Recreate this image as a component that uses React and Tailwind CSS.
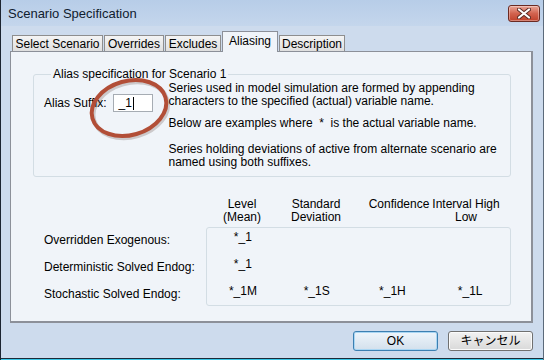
import React from 'react';

const tabs = [
  { label: 'Select Scenario', w: 'w-[91px]' },
  { label: 'Overrides', w: 'w-[60px]' },
  { label: 'Excludes', w: 'w-[56px]' },
  { label: 'Aliasing', w: 'w-[56px]', active: true },
  { label: 'Description', w: 'w-[66px]' },
];

const rows = [
  { label: 'Overridden Exogenous:', values: ['*_1', '', '', ''] },
  { label: 'Deterministic Solved Endog:', values: ['*_1', '', '', ''] },
  { label: 'Stochastic Solved Endog:', values: ['*_1M', '*_1S', '*_1H', '*_1L'] },
];

const colW = ['w-[72px]', 'w-[76px]', 'w-[76px]', 'w-[80px]'];

const CloseButton = () => (
  <div className="w-[32px] h-[17px] mt-[5px] mr-[3px] rounded-[3px] border border-[#6b2a22] bg-gradient-to-b from-[#e9a597] via-[#d2634f] to-[#c0402a] flex items-center justify-center shadow-[inset_0_0_0_1px_rgba(255,255,255,0.35)]">
    <svg width="14" height="11" viewBox="0 0 14 11">
      <path d="M2 1.5 L12 9.5 M12 1.5 L2 9.5" stroke="#5a2a24" strokeWidth="4" strokeLinecap="round" />
      <path d="M2 1.5 L12 9.5 M12 1.5 L2 9.5" stroke="#ffffff" strokeWidth="2.2" strokeLinecap="round" />
    </svg>
  </div>
);

export default function App() {
  return (
    <div className="relative w-[544px] h-[360px] flex flex-col bg-[#cddbed] border-l border-l-[#1c2430] border-r border-r-[#5c6a7a] text-black text-[12px] font-['Liberation_Sans','Noto_Sans_CJK_JP',sans-serif]">
      {/* title bar */}
      <div className="h-[26px] flex items-start justify-between bg-gradient-to-b from-[#b7cde8] to-[#c4d6ec]">
        <div className="pt-[6px] pl-[7px] text-[13px] leading-[16px] text-[#10202f]">Scenario Specification</div>
        <CloseButton />
      </div>

      {/* tabs */}
      <div className="mt-[5px] ml-[11px] h-[20px] flex items-end gap-[1px] relative z-10">
        {tabs.map((t) =>
          t.active ? (
            <div
              key={t.label}
              className={`${t.w} h-[21px] -mb-[1px] border border-b-0 border-[#8c9099] bg-[#f0f4f9] flex items-center justify-center pb-[2px] leading-[14px]`}
            >
              {t.label}
            </div>
          ) : (
            <div
              key={t.label}
              className={`${t.w} h-[16px] border border-b-0 border-[#8e8e8e] bg-gradient-to-b from-[#f4f4f4] to-[#dfdfdf] flex items-center justify-center leading-[14px]`}
            >
              {t.label}
            </div>
          )
        )}
      </div>

      {/* panel */}
      <div className="ml-[9px] w-[523px] h-[272px] border border-[#8c9099] border-r-2 border-b-2 bg-[#f0f4f9] flex flex-col">
        <fieldset className="ml-[22px] mt-[16px] w-[478px] h-[109px] border border-[#d3dde4] rounded-[3px] pl-[10px]">
          <legend className="ml-[7px] px-[2px] leading-[13px]">Alias specification for Scenario 1</legend>
          <div className="flex items-start pt-[1px]">
            <div className="flex items-center gap-[7px] mt-[12px]">
              <span className="leading-[14px]">Alias Suffix:</span>
              <div className="w-[40px] h-[18px] border border-[#a6acb3] bg-white flex items-center pl-[4px] leading-[14px]">
                _1<span className="inline-block w-[1px] h-[13px] bg-black ml-[1px]" />
              </div>
            </div>
            <div className="ml-[15px] leading-[13px]">
              <p>Series used in model simulation are formed by appending<br />characters to the specified (actual) variable name.</p>
              <p className="mt-[9px]">Below are examples where&nbsp; *&nbsp; is the actual variable name.</p>
              <p className="mt-[13px]">Series holding deviations of active from alternate scenario are<br />named using both suffixes.</p>
            </div>
          </div>
        </fieldset>

        {/* headers */}
        <div className="mt-[21px] ml-[195px] flex leading-[13px] text-center">
          <div className={colW[0]}>Level<br />(Mean)</div>
          <div className={colW[1]}>Standard<br />Deviation</div>
          <div className={`${colW[2]} pl-[14px]`}>Confidence</div>
          <div className={`${colW[3]} pr-[8px]`}>Interval High<br />Low</div>
        </div>

        {/* rows */}
        <div className="mt-[3px] flex">
          <div className="w-[195px] pl-[33px] pt-[7px] leading-[12px]">
            {rows.map((r) => (
              <div key={r.label} className="h-[27px]">{r.label}</div>
            ))}
          </div>
          <div className="w-[305px] h-[79px] border border-[#d3dde4] rounded-[3px] leading-[12px]">
            {rows.map((r) => (
              <div key={r.label} className="h-[27px] pt-[3px] flex text-center">
                {r.values.map((v, i) => (
                  <div key={i} className={colW[i]}>{v}</div>
                ))}
              </div>
            ))}
          </div>
        </div>
      </div>

      {/* buttons */}
      <div className="mt-[8px] pr-[10px] flex justify-end gap-[10px]">
        <button className="w-[85px] h-[20px] rounded-[3px] border border-[#3c7fb1] bg-gradient-to-b from-[#eef5fb] to-[#d3e0ec] shadow-[inset_0_0_0_1px_#a9d6f3] leading-[14px]">OK</button>
        <button className="w-[85px] h-[20px] rounded-[3px] border border-[#707070] bg-gradient-to-b from-[#f2f2f2] to-[#d9d9d9] shadow-[inset_0_0_0_1px_#fbfbfb] leading-[14px]">キャンセル</button>
      </div>

      <div className="mt-auto h-[1px] bg-[#1c2a38]" />
      <div className="h-[1px] bg-[#3ac6e6]" />

      {/* red annotation ellipse */}
      <svg className="absolute left-[80px] top-[70px] w-[96px] h-[76px]" width="96" height="76" viewBox="0 0 96 76">
        <g transform="translate(1.5 2) rotate(-16 48 38)">
          <ellipse cx="48" cy="38" rx="38" ry="27" fill="none" stroke="rgba(60,30,20,0.2)" strokeWidth="4.5" />
        </g>
        <g transform="rotate(-16 48 38)">
          <ellipse cx="48" cy="38" rx="38" ry="27" fill="none" stroke="#b24e37" strokeWidth="4" />
        </g>
      </svg>
    </div>
  );
}
